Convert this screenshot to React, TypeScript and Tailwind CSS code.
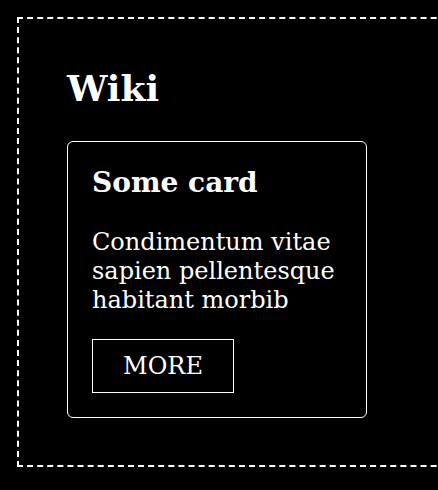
export default function App() {
  return (
    <div className="w-[438px] h-[490px] overflow-hidden bg-black text-white font-['DejaVu_Serif',serif]">
      <div className="ml-[17px] mt-[17px] w-[460px] h-[450px] border-2 border-dashed border-white pl-[48px] pt-[48px]">
        <h1 className="text-[36px] leading-[42px] font-bold">Wiki</h1>
        <div className="mt-[32px] w-[300px] rounded-[6px] border border-white p-[24px]">
          <h2 className="text-[28px] leading-[33px] font-bold">Some card</h2>
          <p className="mt-[29px] text-[24px] leading-[29px]">
            Condimentum vitae sapien pellentesque habitant morbib
          </p>
          <button className="mt-[24px] flex h-[54px] w-[142px] items-center justify-center border border-white text-[24px]">
            MORE
          </button>
        </div>
      </div>
    </div>
  );
}
